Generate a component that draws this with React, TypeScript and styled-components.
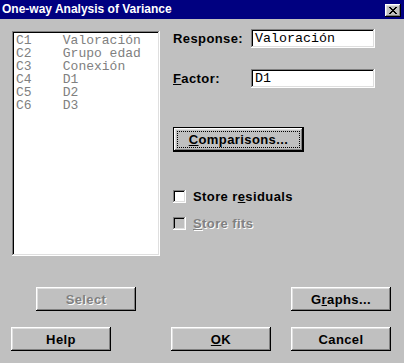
import React from 'react'
import styled, { createGlobalStyle, css } from 'styled-components'

const GlobalStyle = createGlobalStyle`
  html, body {
    margin: 0;
    padding: 0;
    background: #c0c0c0;
  }
  body {
    width: 404px;
    height: 363px;
    overflow: hidden;
    font-family: "Liberation Sans", Arial, sans-serif;
  }
`

const raised = css`
  box-shadow: inset -1px -1px #000, inset 1px 1px #fff,
    inset -2px -2px #808080, inset 2px 2px #dfdfdf;
`

const sunken = css`
  box-shadow: inset -1px -1px #fff, inset 1px 1px #808080,
    inset -2px -2px #dfdfdf, inset 2px 2px #000;
`

const Window = styled.div`
  width: 404px;
  height: 363px;
  background: #c0c0c0;
  display: flex;
  flex-direction: column;
`

const TitleBar = styled.div`
  height: 19px;
  background: #000080;
  display: flex;
  align-items: center;
  justify-content: space-between;
  padding: 0 3px 0 2px;
`

const Title = styled.span`
  color: #fff;
  font-weight: bold;
  font-size: 12px;
  line-height: 19px;
`

const CloseButton = styled.div`
  width: 16px;
  height: 13px;
  margin-top: 1px;
  background: #c0c0c0;
  ${raised};
  display: flex;
  align-items: center;
  justify-content: center;
`

const Main = styled.div`
  display: flex;
  padding-left: 12px;
`

const ListBox = styled.div`
  margin-top: 12px;
  width: 148px;
  height: 225px;
  background: #fff;
  ${sunken};
  padding: 3px 4px;
  box-sizing: border-box;
`

const ListItem = styled.div`
  font-family: "Liberation Mono", "Courier New", monospace;
  font-size: 13px;
  line-height: 13px;
  height: 13px;
  color: #808080;
  white-space: pre;
`

const Side = styled.div`
  margin-left: 13px;
  padding-top: 10px;
  display: flex;
  flex-direction: column;
  align-items: flex-start;
`

const FieldRow = styled.div<{ $gap?: number }>`
  display: flex;
  align-items: center;
  height: 19px;
  margin-top: ${(p) => p.$gap ?? 0}px;
`

const Label = styled.span`
  width: 78px;
  font-weight: bold;
  font-size: 13px;
  letter-spacing: 0.4px;
  color: #000;
`

const TextField = styled.div`
  width: 124px;
  height: 19px;
  box-sizing: border-box;
  background: #fff;
  ${sunken};
  padding: 3px 4px 0;
  font-family: "Liberation Mono", "Courier New", monospace;
  font-size: 13.33px;
  line-height: 14px;
  color: #000;
  white-space: pre;
`

const Button = styled.div<{ $w?: number; $h?: number; $ml?: number; $default?: boolean; $disabled?: boolean }>`
  width: ${(p) => p.$w ?? 100}px;
  height: ${(p) => p.$h ?? 24}px;
  margin-left: ${(p) => p.$ml ?? 0}px;
  box-sizing: border-box;
  background: #c0c0c0;
  display: flex;
  align-items: center;
  justify-content: center;
  font-weight: bold;
  font-size: 13px;
  letter-spacing: 0.4px;
  color: ${(p) => (p.$disabled ? '#808080' : '#000')};
  text-shadow: ${(p) => (p.$disabled ? '1px 1px #fff' : 'none')};
  ${(p) =>
    p.$default
      ? css`
          border: 1px solid #000;
          ${raised};
        `
      : raised};
`

const FocusRing = styled.span`
  outline: 1px dotted #000;
  outline-offset: 0;
  width: calc(100% - 8px);
  height: calc(100% - 8px);
  display: flex;
  align-items: center;
  justify-content: center;
`

const CheckRow = styled.div<{ $gap: number; $disabled?: boolean }>`
  display: flex;
  align-items: center;
  margin-top: ${(p) => p.$gap}px;
  font-weight: bold;
  font-size: 13px;
  letter-spacing: 0.4px;
  color: ${(p) => (p.$disabled ? '#808080' : '#000')};
  text-shadow: ${(p) => (p.$disabled ? '1px 1px #fff' : 'none')};
`

const CheckBox = styled.span<{ $disabled?: boolean }>`
  width: 13px;
  height: 13px;
  margin-right: 7px;
  background: ${(p) => (p.$disabled ? '#c0c0c0' : '#fff')};
  ${sunken};
`

const Footer = styled.div`
  display: flex;
  flex-direction: column;
`

const ButtonRow = styled.div<{ $top: number }>`
  display: flex;
  margin-top: ${(p) => p.$top}px;
`

const CloseIcon = () => (
  <svg width="8" height="7" viewBox="0 0 8 7">
    <path d="M0 0h2v1h1v1h2V1h1V0h2v1H7v1H6v1H5v1h1v1h1v1h1v1H6V6H5V5H3v1H2v1H0V6h1V5h1V4h1V3H2V2H1V1H0z" fill="#000" />
  </svg>
)

const columns = [
  ['C1', 'Valoración'],
  ['C2', 'Grupo edad'],
  ['C3', 'Conexión'],
  ['C4', 'D1'],
  ['C5', 'D2'],
  ['C6', 'D3'],
]

export default function App() {
  return (
    <Window>
      <GlobalStyle />
      <TitleBar>
        <Title>One-way Analysis of Variance</Title>
        <CloseButton>
          <CloseIcon />
        </CloseButton>
      </TitleBar>
      <Main>
        <ListBox>
          {columns.map(([id, name]) => (
            <ListItem key={id}>{`${id}    ${name}`}</ListItem>
          ))}
        </ListBox>
        <Side>
          <FieldRow>
            <Label>Response:</Label>
            <TextField>Valoración</TextField>
          </FieldRow>
          <FieldRow $gap={21}>
            <Label>
              <u>F</u>actor:
            </Label>
            <TextField>D1</TextField>
          </FieldRow>
          <Button $w={131} $h={25} $default style={{ marginTop: 39 }}>
            <FocusRing>
              <span>
                <u>C</u>omparisons...
              </span>
            </FocusRing>
          </Button>
          <CheckRow $gap={37}>
            <CheckBox />
            Store r<u>e</u>siduals
          </CheckRow>
          <CheckRow $gap={12} $disabled>
            <CheckBox $disabled />
            <span>
              <u>S</u>tore fits
            </span>
          </CheckRow>
        </Side>
      </Main>
      <Footer>
        <ButtonRow $top={31}>
          <Button $ml={36} $disabled>
            Select
          </Button>
          <Button $ml={155}>
            G<u>r</u>aphs...
          </Button>
        </ButtonRow>
        <ButtonRow $top={16}>
          <Button $ml={11}>Help</Button>
          <Button $ml={60}>
            <u>O</u>K
          </Button>
          <Button $ml={20}>Cancel</Button>
        </ButtonRow>
      </Footer>
    </Window>
  )
}
